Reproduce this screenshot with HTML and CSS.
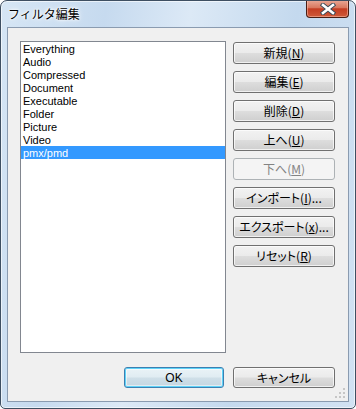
FILE: index.html
```html
<!DOCTYPE html>
<html lang="ja">
<head>
    <meta charset="UTF-8">
    <title>フィルタ編集</title>
    <link rel="stylesheet" href="styles.css">
</head>
<body>
    <div class="window">
        <div class="titlebar">
            <span class="title">フィルタ編集</span>
            <div class="close-btn">
                <svg viewBox="0 0 16 12" width="16" height="12">
                    <path d="M3 2 L13 10 M13 2 L3 10" stroke="#3b4a58" stroke-width="4.4" stroke-linecap="square"></path>
                    <path d="M3 2 L13 10 M13 2 L3 10" stroke="#ffffff" stroke-width="2.6" stroke-linecap="square"></path>
                </svg>
            </div>
        </div>

        <div class="client">
            <div class="main">
                <ul class="filter-list">
                    <li>Everything</li>
                    <li>Audio</li>
                    <li>Compressed</li>
                    <li>Document</li>
                    <li>Executable</li>
                    <li>Folder</li>
                    <li>Picture</li>
                    <li>Video</li>
                    <li class="selected">pmx/pmd</li>
                </ul>

                <div class="side-buttons">
                    <button class="btn">新規(<u>N</u>)</button>
                    <button class="btn">編集(<u>E</u>)</button>
                    <button class="btn">削除(<u>D</u>)</button>
                    <button class="btn">上へ(<u>U</u>)</button>
                    <button class="btn disabled">下へ(<u>M</u>)</button>
                    <button class="btn">インポート(<u>I</u>)...</button>
                    <button class="btn">エクスポート(<u>x</u>)...</button>
                    <button class="btn">リセット(<u>R</u>)</button>
                </div>
            </div>

            <div class="footer">
                <button class="btn btn-default">OK</button>
                <button class="btn btn-cancel">キャンセル</button>
            </div>

            <svg class="grip" viewBox="0 0 10 10" width="10" height="10">
                <rect x="8" y="0" width="2" height="2" fill="#c6c6c6"></rect>
                <rect x="4" y="4" width="2" height="2" fill="#c6c6c6"></rect>
                <rect x="8" y="4" width="2" height="2" fill="#c6c6c6"></rect>
                <rect x="0" y="8" width="2" height="2" fill="#c6c6c6"></rect>
                <rect x="4" y="8" width="2" height="2" fill="#c6c6c6"></rect>
                <rect x="8" y="8" width="2" height="2" fill="#c6c6c6"></rect>
            </svg>
        </div>
    </div>
</body>
</html>
```

FILE: styles.css
```css
:root {
    --frame-color: #bfd4ea;
    --frame-border: #3e4f62;
    --client-bg: #f0f0f0;
    --select-bg: #3399ff;
    --font-list: 'Liberation Sans', 'Noto Sans CJK JP', sans-serif;
    --font-ui: 'Noto Sans CJK JP', 'Liberation Sans', sans-serif;
}

* {
    margin: 0;
    padding: 0;
    box-sizing: border-box;
}

body {
    background: #ffffff;
    width: 356px;
    height: 409px;
    overflow: hidden;
}

.window {
    width: 356px;
    height: 409px;
    display: flex;
    flex-direction: column;
    border: 1px solid var(--frame-border);
    border-radius: 7px 7px 5px 5px;
    background: linear-gradient(100deg, #d6e6f5 0%, #c6daef 25%, #dce9f6 45%, #c4d9ee 70%, #d2e2f3 100%);
    box-shadow: inset 0 0 0 1px rgba(255, 255, 255, 0.6);
    overflow: hidden;
}

/* Title bar */
.titlebar {
    height: 26px;
    display: flex;
    align-items: flex-start;
    justify-content: space-between;
    flex-shrink: 0;
}

.title {
    font-family: var(--font-ui);
    font-size: 12px;
    line-height: 14px;
    color: #000;
    margin: 6px 0 0 7px;
    text-shadow: 0 0 6px #fff, 0 0 3px #fff, 0 0 2px #fff;
}

.close-btn {
    width: 43px;
    height: 18px;
    margin: -1px 6px 0 0;
    display: flex;
    align-items: center;
    justify-content: center;
    border: 1px solid #4a1e14;
    border-top: none;
    border-radius: 0 0 4px 4px;
    background: linear-gradient(#e9aa98 0%, #d9785f 45%, #c43d22 52%, #cf5a3a 100%);
    box-shadow: inset 0 0 0 1px rgba(255, 200, 180, 0.5);
}

/* Client area */
.client {
    flex: 1;
    margin: 0 6px 6px;
    border: 1px solid #8a9bb0;
    background: var(--client-bg);
    padding: 13px 13px 0 12px;
    display: flex;
    flex-direction: column;
    position: relative;
}

.main {
    display: flex;
    gap: 7px;
}

.filter-list {
    list-style: none;
    width: 206px;
    height: 312px;
    border: 1px solid #828790;
    background: #ffffff;
    font-family: var(--font-list);
    font-size: 11px;
    color: #000;
}

.filter-list li {
    height: 13px;
    padding-top: 2px;
    line-height: 11px;
    padding-left: 2px;
    white-space: nowrap;
}

.filter-list li.selected {
    background: var(--select-bg);
    color: #ffffff;
}

.side-buttons {
    display: flex;
    flex-direction: column;
    gap: 7px;
    margin-top: 1px;
}

.btn {
    width: 102px;
    height: 22px;
    border: 1px solid #707070;
    border-radius: 3px;
    background: linear-gradient(#f2f2f2 0%, #ebebeb 48%, #dddddd 52%, #cfcfcf 100%);
    box-shadow: inset 0 0 0 1px rgba(255, 255, 255, 0.7);
    font-family: var(--font-ui);
    font-size: 12px;
    line-height: 18px;
    font-feature-settings: "palt";
    color: #000;
    cursor: pointer;
    white-space: nowrap;
}

.btn u {
    text-underline-offset: 1px;
}

.btn.disabled {
    border-color: #adb2b5;
    background: #f4f4f4;
    box-shadow: none;
    color: #838383;
}

.footer {
    display: flex;
    justify-content: flex-end;
    gap: 9px;
    margin-top: 14px;
}

.btn-default {
    width: 100px;
    height: 21px;
    border-color: #3c7fb1;
    background: linear-gradient(#eaf3f7 0%, #e0ecf2 48%, #cfdfe8 52%, #c4d6e1 100%);
    box-shadow: inset 0 0 0 1px #5fd3f8, inset 0 0 0 2px rgba(255, 255, 255, 0.5);
    font-family: var(--font-list);
    font-size: 12px;
}

.btn-cancel {
    height: 21px;
}

.grip {
    position: absolute;
    right: 3px;
    bottom: 3px;
}
```
